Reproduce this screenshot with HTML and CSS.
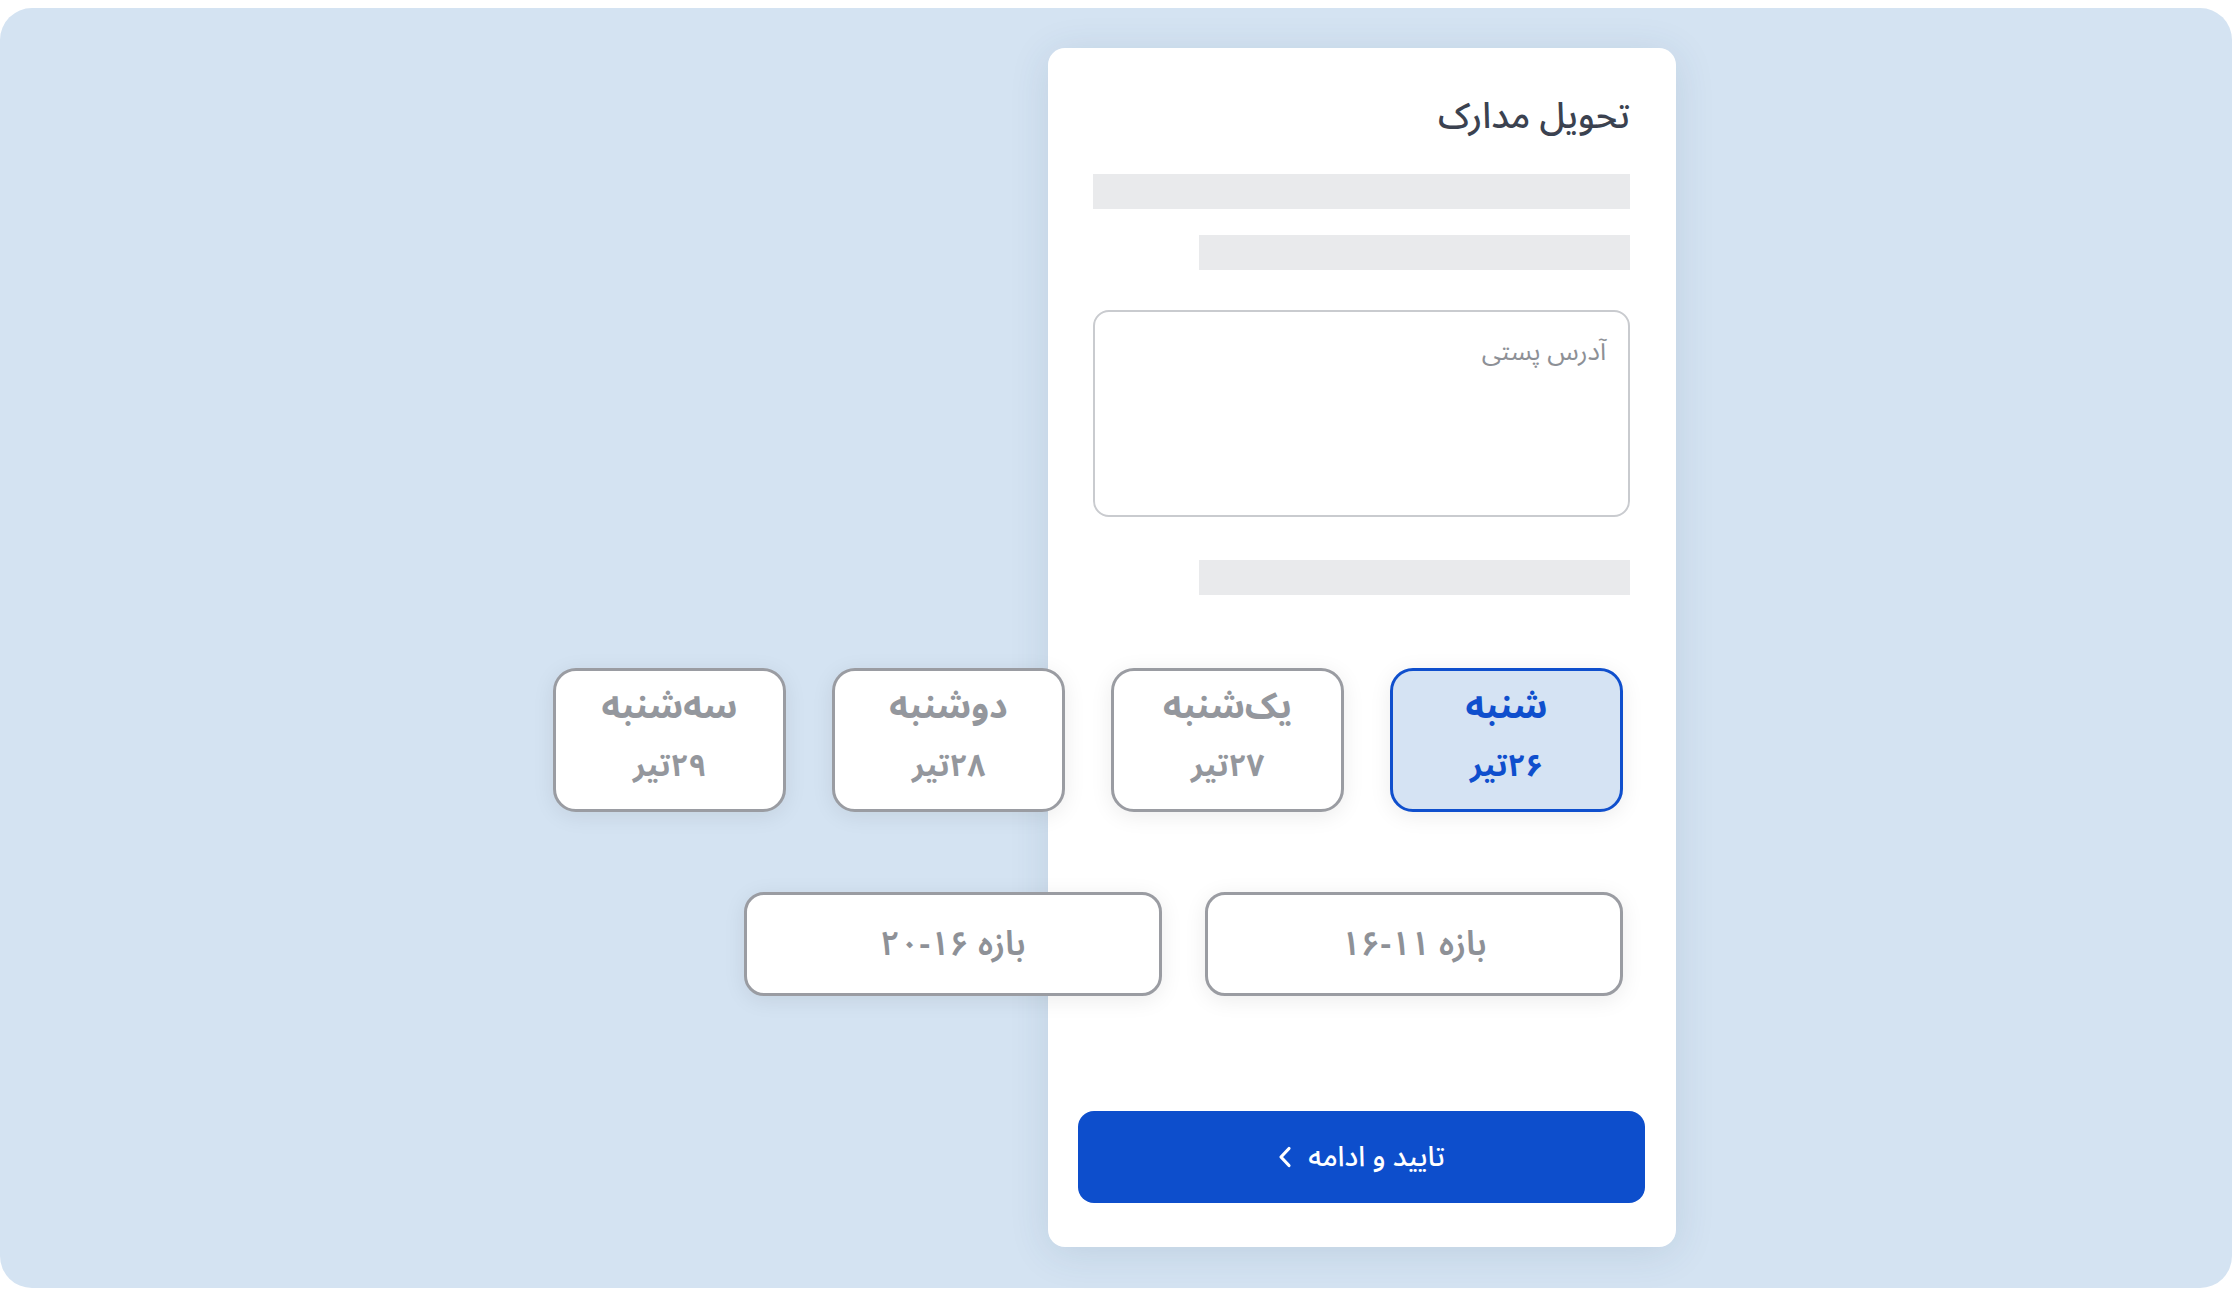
FILE: index.html
```html
<!DOCTYPE html>
<html lang="fa">
<head>
    <meta charset="UTF-8">
    <meta name="viewport" content="width=device-width, initial-scale=1.0">
    <title>تحویل مدارک</title>
    <link rel="stylesheet" href="styles.css">
</head>
<body>
    <div class="stage">
        <section class="card" dir="rtl">
            <h1 class="card-title">تحویل مدارک</h1>

            <div class="skeleton skeleton-full"></div>
            <div class="skeleton skeleton-short skeleton-tight"></div>

            <textarea class="address" placeholder="آدرس پستی"></textarea>

            <div class="skeleton skeleton-short skeleton-after-address"></div>

            <div class="days">
                <button class="day is-active">
                    <span class="day-name">شنبه</span>
                    <span class="day-date">۲۶تیر</span>
                </button>
                <button class="day">
                    <span class="day-name">یک‌شنبه</span>
                    <span class="day-date">۲۷تیر</span>
                </button>
                <button class="day">
                    <span class="day-name">دوشنبه</span>
                    <span class="day-date">۲۸تیر</span>
                </button>
                <button class="day">
                    <span class="day-name">سه‌شنبه</span>
                    <span class="day-date">۲۹تیر</span>
                </button>
            </div>

            <div class="slots">
                <button class="slot">بازه ۱۱-۱۶</button>
                <button class="slot">بازه ۱۶-۲۰</button>
            </div>

            <button class="submit">
                <span>تایید و ادامه</span>
                <svg class="submit-icon" width="14" height="22" viewBox="0 0 14 22" fill="none">
                    <path d="M11 2.5 L3 11 L11 19.5" stroke="#fff" stroke-width="3.2" stroke-linecap="round" stroke-linejoin="round"/>
                </svg>
            </button>
        </section>
    </div>
</body>
</html>
```

FILE: styles.css
```css
* {
    box-sizing: border-box;
}

body {
    margin: 0;
    padding: 8px 0 0;
    height: 100vh;
    background-color: #fff;
    font-family: "Noto Sans Arabic", "DejaVu Sans", sans-serif;
    overflow: hidden;
}

.stage {
    height: 1280px;
    background-color: #d4e3f2;
    border-radius: 32px;
    display: flex;
    align-items: flex-start;
    padding: 40px 0 0 1048px;
}

.card {
    width: 628px;
    background-color: #fff;
    border-radius: 17px;
    padding: 47px 46px 44px 45px;
    box-shadow: 0 6px 40px rgba(40, 70, 110, 0.12);
    display: flex;
    flex-direction: column;
}

.card-title {
    margin: 0;
    font-size: 36px;
    line-height: 44px;
    font-weight: 500;
    color: #3b4250;
}

.skeleton {
    height: 35px;
    background-color: #e9eaec;
    margin-top: 35px;
}

.skeleton-full {
    width: 100%;
}

.skeleton-short {
    width: 431px;
}

.skeleton-tight {
    margin-top: 26px;
}

.skeleton-after-address {
    margin-top: 43px;
}

.address {
    display: block;
    width: 100%;
    height: 207px;
    margin-top: 40px;
    padding: 20px 22px;
    border: 2px solid #c9cbcf;
    border-radius: 16px;
    font-family: inherit;
    font-size: 26px;
    line-height: 40px;
    color: #3b4250;
    resize: none;
    outline: none;
}

.address::placeholder {
    color: #8d9096;
}

.days {
    display: flex;
    gap: 46px;
    margin-top: 73px;
    margin-right: 7px;
}

.day {
    flex: 0 0 233px;
    height: 144px;
    display: flex;
    flex-direction: column;
    align-items: center;
    gap: 16px;
    padding: 13px 0 0;
    background-color: #fff;
    border: 3px solid #9a9ca2;
    border-radius: 23px;
    box-shadow: 0 4px 22px rgba(0, 0, 0, 0.08);
    font-family: inherit;
    font-weight: bold;
    color: #94979d;
    cursor: pointer;
}

.day-name {
    font-size: 36px;
    line-height: 46px;
}

.day-date {
    font-size: 31px;
    line-height: 40px;
}

.day.is-active {
    background-color: #d5e3f3;
    border-color: #0f4fcd;
    color: #0f4fcd;
}

.slots {
    display: flex;
    gap: 43px;
    margin-top: 80px;
    margin-right: 7px;
}

.slot {
    flex: 0 0 418px;
    height: 104px;
    background-color: #fff;
    border: 3px solid #9a9ca2;
    border-radius: 20px;
    box-shadow: 0 4px 22px rgba(0, 0, 0, 0.08);
    font-family: inherit;
    font-size: 34px;
    font-weight: 600;
    color: #8e9197;
    cursor: pointer;
}

.submit {
    height: 92px;
    margin: 115px -15px 0;
    display: flex;
    justify-content: center;
    align-items: center;
    gap: 16px;
    background-color: #0d4ecc;
    border: none;
    border-radius: 16px;
    font-family: inherit;
    font-size: 28px;
    font-weight: 500;
    color: #fff;
    cursor: pointer;
}

.submit-icon {
    display: block;
}
```
